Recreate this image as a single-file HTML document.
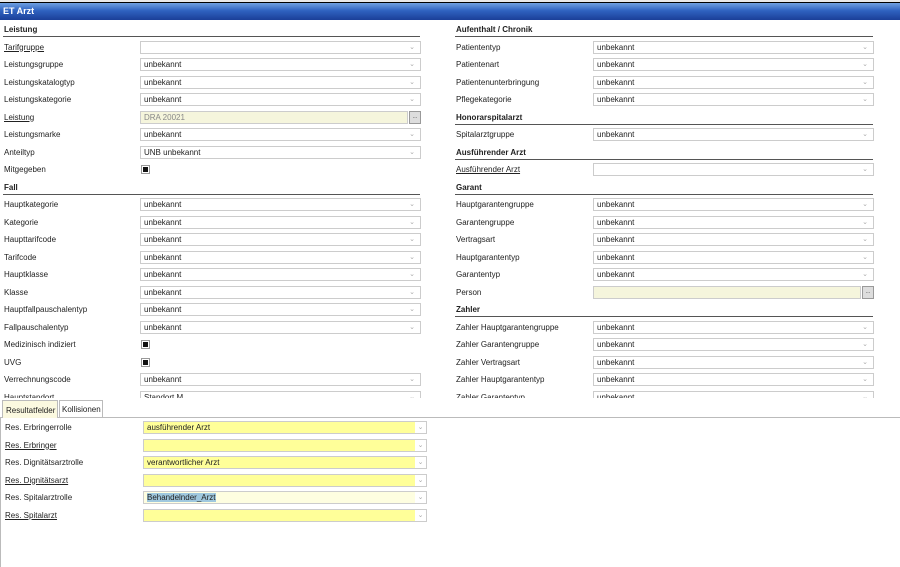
<!DOCTYPE html>
<html><head><meta charset="utf-8"><style>
*{margin:0;padding:0;box-sizing:border-box}
body{width:900px;height:567px;overflow:hidden;background:#fff;font-family:"Liberation Sans",Arial,sans-serif;font-size:8px;color:#222;position:relative}
.top{position:absolute;left:0;top:0;width:900px;height:3px;background:#e8e8e8;border-bottom:1px solid #000}
.title{position:absolute;left:0;top:3px;width:900px;height:17px;background:linear-gradient(#6fa0e0,#2f62c0 45%,#1b3f98);color:#fff;font-weight:bold;font-size:9px;padding:3px 3px}
.a{position:absolute}
.l{position:absolute;white-space:nowrap;line-height:10px}
.u{text-decoration:underline}
.h{font-weight:bold}
.line{position:absolute;height:1px;background:#555}
.in{position:absolute;height:13px;border:1px solid #ccc;background:#fff;line-height:11px;padding-left:3px;white-space:nowrap;overflow:hidden}
.in i{position:absolute;right:5px;top:0;font-style:normal;color:#aaa;font-size:7px}
.cb{position:absolute;width:9px;height:9px;border:1px solid #999;background:#fff}
.cb::after{content:"";position:absolute;left:1px;top:1px;width:5px;height:5px;background:#111}
.btn{position:absolute;width:12px;height:13px;border:1px solid #999;background:#ddd;font-size:6px;text-align:center;line-height:11px;color:#555}
</style></head><body>
<div class="top"></div>
<div class="title">ET Arzt</div>
<div class="a" style="left:0;top:20px;width:900px;height:378px;overflow:hidden" id="sc">
</div>
<div class="a" style="left:0;top:417px;width:900px;height:1px;background:#bbb"></div>
<div class="a" style="left:0;top:417px;width:1px;height:150px;background:#bbb"></div>
<div class="a" style="left:2px;top:400px;width:56px;height:18px;background:#fbf9e0;border:1px solid #bbb;border-bottom:none;padding:5px 3px;font-size:8px">Resultatfelder</div>
<div class="a" style="left:59px;top:400px;width:44px;height:17px;background:#fff;border:1px solid #bbb;border-bottom:none;padding:4px 2px;font-size:8px">Kollisionen</div>
<script>
var sc=document.getElementById('sc');
function add(p,h){var d=document.createElement('div');d.innerHTML=h;while(d.firstChild)p.appendChild(d.firstChild);}
function col(lx,ix,iw,lineEnd,rows){
 rows.forEach(function(r,i){var c=9+17.5*i;
  if(r[0]=='H'){add(sc,'<div class="l h" style="left:'+lx+'px;top:'+(c-4)+'px">'+r[1]+'</div><div class="line" style="left:'+(lx-1)+'px;top:'+(c+7)+'px;width:'+(lineEnd-lx+1)+'px"></div>');return;}
  add(sc,'<div class="l'+(r[0]=='U'?' u':'')+'" style="left:'+lx+'px;top:'+(c-4)+'px">'+r[1]+'</div>');
  if(r[2]=='cb')add(sc,'<div class="cb" style="left:'+(ix+1)+'px;top:'+(c-4)+'px"></div>');
  else if(r[2]=='btn')add(sc,'<div class="in" style="left:'+ix+'px;top:'+(c-6)+'px;width:'+(iw-13)+'px;background:#f5f5dc;color:#888">'+r[3]+'</div><div class="btn" style="left:'+(ix+iw-12)+'px;top:'+(c-6)+'px">...</div>');
  else add(sc,'<div class="in" style="left:'+ix+'px;top:'+(c-6)+'px;width:'+iw+'px">'+(r[2]||'')+'<i>&#8964;</i></div>');
 });}
var U='unbekannt';
col(4,140,281,420,[['H','Leistung'],['U','Tarifgruppe',''],['N','Leistungsgruppe',U],['N','Leistungskatalogtyp',U],['N','Leistungskategorie',U],['U','Leistung','btn','DRA 20021'],['N','Leistungsmarke',U],['N','Anteiltyp','UNB unbekannt'],['N','Mitgegeben','cb'],
['H','Fall'],['N','Hauptkategorie',U],['N','Kategorie',U],['N','Haupttarifcode',U],['N','Tarifcode',U],['N','Hauptklasse',U],['N','Klasse',U],['N','Hauptfallpauschalentyp',U],['N','Fallpauschalentyp',U],['N','Medizinisch indiziert','cb'],['N','UVG','cb'],['N','Verrechnungscode',U],['N','Hauptstandort','Standort M']]);
col(456,593,281,873,[['H','Aufenthalt / Chronik'],['N','Patiententyp',U],['N','Patientenart',U],['N','Patientenunterbringung',U],['N','Pflegekategorie',U],['H','Honorarspitalarzt'],['N','Spitalarztgruppe',U],['H','Ausführender Arzt'],['U','Ausführender Arzt',''],['H','Garant'],['N','Hauptgarantengruppe',U],['N','Garantengruppe',U],['N','Vertragsart',U],['N','Hauptgarantentyp',U],['N','Garantentyp',U],['N','Person','btn',''],['H','Zahler'],['N','Zahler Hauptgarantengruppe',U],['N','Zahler Garantengruppe',U],['N','Zahler Vertragsart',U],['N','Zahler Hauptgarantentyp',U],['N','Zahler Garantentyp',U]]);
var b=document.body;
[['N','Res. Erbringerrolle','ausführender Arzt'],['U','Res. Erbringer',''],['N','Res. Dignitätsarztrolle','verantwortlicher Arzt'],['U','Res. Dignitätsarzt',''],['N','Res. Spitalarztrolle','S'],['U','Res. Spitalarzt','']].forEach(function(r,i){var c=427+17.5*i;
 add(b,'<div class="l'+(r[0]=='U'?' u':'')+'" style="left:5px;top:'+(c-4)+'px">'+r[1]+'</div>');
 var bg=r[2]=='S'?'#fefee0':'#ffff99',t=r[2]=='S'?'<span style="background:#9fc8de">Behandelnder_Arzt</span>':r[2];
 add(b,'<div class="in" style="left:143px;top:'+(c-6)+'px;width:284px;background:'+bg+'">'+t+'<i style="background:#fff;right:0;width:11px;text-align:center;height:11px">&#8964;</i></div>');
});
</script>
</body></html>
